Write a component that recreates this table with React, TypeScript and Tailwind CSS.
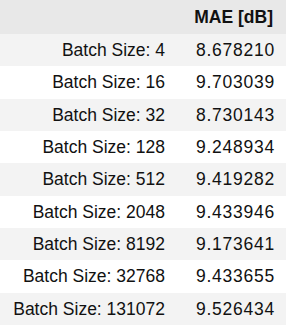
import React from "react";

const rows: [string, string][] = [
  ["4", "8.678210"],
  ["16", "9.703039"],
  ["32", "8.730143"],
  ["128", "9.248934"],
  ["512", "9.419282"],
  ["2048", "9.433946"],
  ["8192", "9.173641"],
  ["32768", "9.433655"],
  ["131072", "9.526434"],
];

export default function App() {
  return (
    <div className="w-[286px] h-[329px] bg-white text-[#111] text-[17.5px] font-['Liberation_Sans',Arial,sans-serif]">
      <div className="flex h-[34px] items-center bg-[#e8e8e8]">
        <div className="w-[165px]" />
        <div className="flex-1 text-right pr-[13px] font-bold">MAE [dB]</div>
      </div>
      {rows.map(([b, v], i) => (
        <div
          key={b}
          className={`flex h-[32.33px] items-center ${i % 2 === 0 ? "bg-[#f3f3f3]" : "bg-white"}`}
        >
          <div className="w-[165px] text-right whitespace-nowrap">Batch Size: {b}</div>
          <div className="flex-1 text-right pr-[11px] tracking-[0.75px]">{v}</div>
        </div>
      ))}
    </div>
  );
}
